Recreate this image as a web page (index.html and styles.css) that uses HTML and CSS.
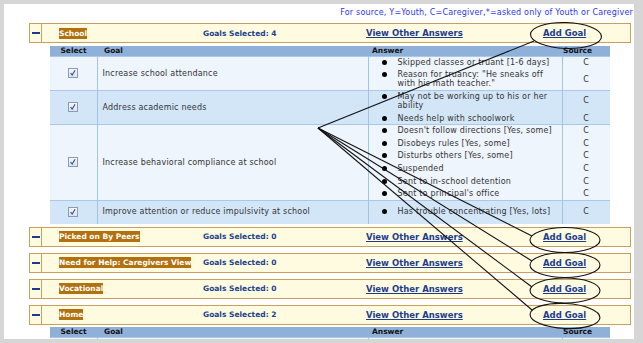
FILE: index.html
```html
<!DOCTYPE html>
<html lang="en">
<head>
    <meta charset="UTF-8">
    <title>Goals</title>
    <link rel="stylesheet" href="styles.css">
</head>
<body>
    <div class="page">
        <div class="legend">For source, Y=Youth, C=Caregiver,*=asked only of Youth or Caregiver</div>

        <div class="goals">
            <!-- School -->
            <div class="section-head">
                <span class="toggle"><span class="minus"></span></span>
                <span class="title-cell"><span class="title">School</span></span>
                <span class="count">Goals Selected: 4</span>
                <a class="link" href="#">View Other Answers</a>
                <a class="link" href="#">Add Goal</a>
            </div>
            <table class="answers">
                <colgroup>
                    <col class="c-sel"><col class="c-goal"><col class="c-ans"><col class="c-src">
                </colgroup>
                <thead>
                    <tr><th class="sel">Select</th><th class="goal">Goal</th><th class="ans">Answer</th><th class="src">Source</th></tr>
                </thead>
                <tbody>
                    <tr class="light first">
                        <td class="sel" rowspan="2"><span class="check"><svg viewBox="0 0 10 10" width="8" height="8"><path d="M2 5.2 L4 7.6 L7.6 1.6"/></svg></span></td>
                        <td class="goal" rowspan="2">Increase school attendance</td>
                        <td class="ans"><div class="item">Skipped classes or truant [1-6 days]</div></td>
                        <td class="src">C</td>
                    </tr>
                    <tr class="light">
                        <td class="ans"><div class="item">Reason for truancy: "He sneaks off with his math teacher."</div></td>
                        <td class="src">C</td>
                    </tr>

                    <tr class="dark first">
                        <td class="sel" rowspan="2"><span class="check"><svg viewBox="0 0 10 10" width="8" height="8"><path d="M2 5.2 L4 7.6 L7.6 1.6"/></svg></span></td>
                        <td class="goal" rowspan="2">Address academic needs</td>
                        <td class="ans"><div class="item">May not be working up to his or her ability</div></td>
                        <td class="src">C</td>
                    </tr>
                    <tr class="dark">
                        <td class="ans"><div class="item">Needs help with schoolwork</div></td>
                        <td class="src">C</td>
                    </tr>

                    <tr class="light first">
                        <td class="sel" rowspan="6"><span class="check"><svg viewBox="0 0 10 10" width="8" height="8"><path d="M2 5.2 L4 7.6 L7.6 1.6"/></svg></span></td>
                        <td class="goal" rowspan="6">Increase behavioral compliance at school</td>
                        <td class="ans"><div class="item">Doesn't follow directions [Yes, some]</div></td>
                        <td class="src">C</td>
                    </tr>
                    <tr class="light">
                        <td class="ans"><div class="item">Disobeys rules [Yes, some]</div></td>
                        <td class="src">C</td>
                    </tr>
                    <tr class="light">
                        <td class="ans"><div class="item">Disturbs others [Yes, some]</div></td>
                        <td class="src">C</td>
                    </tr>
                    <tr class="light">
                        <td class="ans"><div class="item">Suspended</div></td>
                        <td class="src">C</td>
                    </tr>
                    <tr class="light">
                        <td class="ans"><div class="item">Sent to in-school detention</div></td>
                        <td class="src">C</td>
                    </tr>
                    <tr class="light">
                        <td class="ans"><div class="item">Sent to principal's office</div></td>
                        <td class="src">C</td>
                    </tr>

                    <tr class="dark first">
                        <td class="sel"><span class="check"><svg viewBox="0 0 10 10" width="8" height="8"><path d="M2 5.2 L4 7.6 L7.6 1.6"/></svg></span></td>
                        <td class="goal">Improve attention or reduce impulsivity at school</td>
                        <td class="ans"><div class="item">Has trouble concentrating [Yes, lots]</div></td>
                        <td class="src">C</td>
                    </tr>
                </tbody>
            </table>

            <div class="section-head">
                <span class="toggle"><span class="minus"></span></span>
                <span class="title-cell"><span class="title">Picked on By Peers</span></span>
                <span class="count">Goals Selected: 0</span>
                <a class="link" href="#">View Other Answers</a>
                <a class="link" href="#">Add Goal</a>
            </div>

            <div class="section-head">
                <span class="toggle"><span class="minus"></span></span>
                <span class="title-cell"><span class="title">Need for Help: Caregivers View</span></span>
                <span class="count">Goals Selected: 0</span>
                <a class="link" href="#">View Other Answers</a>
                <a class="link" href="#">Add Goal</a>
            </div>

            <div class="section-head">
                <span class="toggle"><span class="minus"></span></span>
                <span class="title-cell"><span class="title">Vocational</span></span>
                <span class="count">Goals Selected: 0</span>
                <a class="link" href="#">View Other Answers</a>
                <a class="link" href="#">Add Goal</a>
            </div>

            <div class="section-head">
                <span class="toggle"><span class="minus"></span></span>
                <span class="title-cell"><span class="title">Home</span></span>
                <span class="count">Goals Selected: 2</span>
                <a class="link" href="#">View Other Answers</a>
                <a class="link" href="#">Add Goal</a>
            </div>
            <table class="answers home">
                <colgroup>
                    <col class="c-sel"><col class="c-goal"><col class="c-ans"><col class="c-src">
                </colgroup>
                <thead>
                    <tr><th class="sel">Select</th><th class="goal">Goal</th><th class="ans">Answer</th><th class="src">Source</th></tr>
                </thead>
                <tbody>
                    <tr class="light first"><td class="sel"></td><td class="goal"></td><td class="ans"></td><td class="src"></td></tr>
                </tbody>
            </table>
        </div>
    </div>

    <!-- hand-drawn callouts over the page -->
    <svg class="callouts" width="643" height="343" viewBox="0 0 643 343">
        <g fill="none" stroke="#111" stroke-width="1.1">
            <path d="M318 128 L534 41"/>
            <path d="M318 128 L532 236"/>
            <path d="M318 128 L532 261"/>
            <path d="M318 128 L532 287"/>
            <path d="M318 128 L532 310"/>
            <ellipse cx="566" cy="35.5" rx="35.5" ry="13" transform="rotate(2 566 35.5)"/>
            <ellipse cx="565" cy="240" rx="35" ry="12.5"/>
            <ellipse cx="565" cy="265" rx="35" ry="12.5"/>
            <ellipse cx="565" cy="290.5" rx="35" ry="12.5"/>
            <ellipse cx="565" cy="316" rx="35" ry="12.5" transform="rotate(3 565 316)"/>
        </g>
    </svg>
</body>
</html>
```

FILE: styles.css
```css
body {
    margin: 0;
    padding: 4px 9px 4px 4px;
    background-color: #d6d6d6;
    font-family: "DejaVu Sans", Verdana, sans-serif;
    font-size: 8px;
    letter-spacing: 0.2px;
    color: #333;
}
.page {
    height: 335px;
    background-color: #fff;
    overflow: hidden;
}
.legend {
    padding: 4px 1px 0 0;
    line-height: 10px;
    text-align: right;
    color: #2a36f2;
}
.goals {
    margin: 0 3px 0 25px;
}

/* section header bar */
.section-head {
    display: grid;
    grid-template-columns: 12px 161px 163px 177px auto;
    align-items: center;
    height: 20px;
    box-sizing: border-box;
    margin-top: 6px;
    border: 1px solid #c9a05a;
    background-color: #fffbe1;
    letter-spacing: 0;
}
.section-head:first-child {
    margin-top: 5px;
}
.answers + .section-head {
    margin-top: 3px;
}
.toggle {
    align-self: stretch;
    display: flex;
    align-items: center;
    justify-content: center;
    border-right: 1px solid #c9a05a;
}
.minus {
    width: 8px;
    height: 2px;
    background-color: #1d3b8a;
}
.title-cell {
    padding-left: 17px;
}
.title {
    display: inline-block;
    padding: 1px 0;
    line-height: 9px;
    font-size: 7.5px;
    background-color: #b3700e;
    color: #fff;
    font-weight: bold;
}
.count {
    font-size: 7.5px;
    font-weight: bold;
    color: #20408a;
}
.link {
    font-size: 8.5px;
    font-weight: bold;
    color: #1d3c8e;
}

/* goals table */
.answers {
    width: 560px;
    margin: 3px 0 0 21px;
    border-collapse: collapse;
    table-layout: fixed;
}
.answers.home {
    margin-top: 2px;
}
.c-sel { width: 47px; }
.c-goal { width: 271px; }
.c-ans { width: 194px; }
.c-src { width: 48px; }
.answers th {
    height: 10px;
    padding: 0;
    line-height: 10px;
    font-size: 7.5px;
    letter-spacing: 0;
    background-color: #8fb0d8;
    color: #111;
    text-align: left;
}
.answers th.sel {
    text-align: center;
}
.answers th.goal {
    padding-left: 7px;
}
.answers th.ans {
    padding-left: 4px;
}
.answers th.src {
    padding-left: 1px;
}
.answers td {
    padding: 0;
    vertical-align: middle;
}
tr.light { background-color: #eef5fd; }
tr.dark { background-color: #d3e6f8; }
tr.first td { box-shadow: inset 0 1px #a9c7e8; }
.answers td.sel {
    height: 10px;
    padding: 7px 0;
    text-align: center;
    border-right: 1px solid #a3c2e4;
}
.answers td.goal {
    padding-left: 5px;
    border-right: 1px solid #a3c2e4;
}
.answers td.ans {
    padding: 1.8px 7px 1.8px 0;
    line-height: 9px;
}
.answers td.src {
    text-align: center;
    border-left: 1px solid #a3c2e4;
}
.item {
    display: flex;
}
.item::before {
    content: "";
    flex: none;
    width: 5px;
    height: 5px;
    margin: 2px 11px 0 13px;
    border-radius: 50%;
    background-color: #000;
}
.check {
    display: inline-flex;
    align-items: center;
    justify-content: center;
    width: 10px;
    height: 10px;
    box-sizing: border-box;
    border: 1px solid #8c9bb3;
    background: linear-gradient(#f7f7f7, #dde2ea);
    vertical-align: middle;
}
.check path {
    fill: none;
    stroke: #2850b0;
    stroke-width: 1.4;
}
.callouts {
    position: absolute;
    top: 0;
    left: 0;
    pointer-events: none;
}
```
